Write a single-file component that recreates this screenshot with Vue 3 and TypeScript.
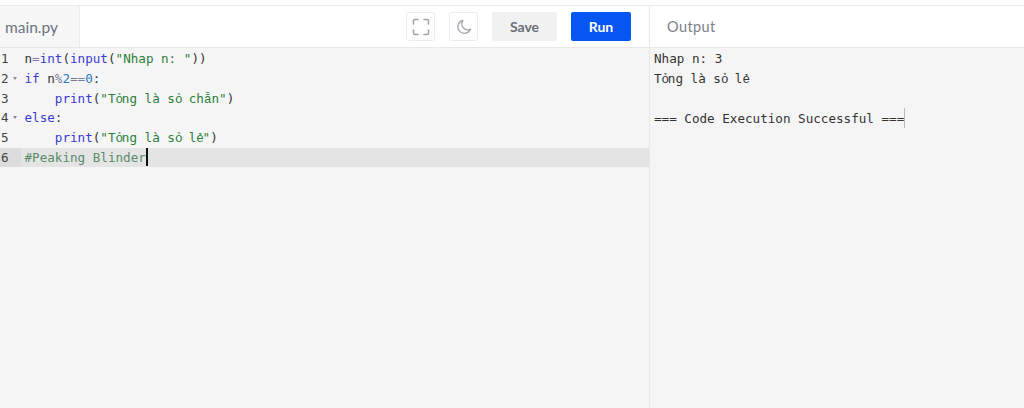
<script setup lang="ts">
interface Tok { t: string; c?: string }

// Split a string so the vowels that fall back to another font get their own span.
function marked(s: string, c: string): Tok[] {
  return s.split(/([ỏẻẵ])/).filter(Boolean).map((t) => ({
    t,
    c: t === 'ẵ' ? `${c} wide` : t === 'ỏ' || t === 'ẻ' ? `${c} narrow` : c,
  }))
}

const lines: { n: number; fold?: boolean; active?: boolean; toks: Tok[] }[] = [
  { n: 1, toks: [{ t: 'n' }, { t: '=', c: 'op' }, { t: 'int', c: 'kw' }, { t: '(' }, { t: 'input', c: 'kw' }, { t: '(' }, { t: '"Nhap n: "', c: 'str' }, { t: '))' }] },
  { n: 2, fold: true, toks: [{ t: 'if', c: 'kw' }, { t: ' n' }, { t: '%', c: 'op' }, { t: '2', c: 'num' }, { t: '==', c: 'op' }, { t: '0', c: 'num' }, { t: ':' }] },
  { n: 3, toks: [{ t: '    ' }, { t: 'print', c: 'kw' }, { t: '(' }, ...marked('"Tỏng là sỏ chẵn"', 'str'), { t: ')' }] },
  { n: 4, fold: true, toks: [{ t: 'else', c: 'kw' }, { t: ':' }] },
  { n: 5, toks: [{ t: '    ' }, { t: 'print', c: 'kw' }, { t: '(' }, ...marked('"Tỏng là sỏ lẻ"', 'str'), { t: ')' }] },
  { n: 6, active: true, toks: [{ t: '#Peaking Blinder', c: 'cmt' }] },
]
const outResult = marked('Tỏng là sỏ lẻ', 'plain')
</script>

<template>
  <div class="page">
    <header class="top">
      <div class="left">
        <div class="tab">main.py</div>
        <div class="actions">
          <button class="icon-btn" aria-label="Fullscreen">
            <svg width="18" height="18" viewBox="0 0 18 18" fill="none" stroke="#a0a5ac" stroke-width="1.6" stroke-linecap="round">
              <path d="M1.500 6V3a1.500 1.500 0 0 1 1.500-1.500H6M12 1.500h3A1.500 1.500 0 0 1 16.500 3V6M16.500 12v3a1.500 1.500 0 0 1-1.500 1.500H12M6 16.500H3A1.500 1.500 0 0 1 1.500 15V12" />
            </svg>
          </button>
          <button class="icon-btn" aria-label="Theme">
            <svg width="18" height="18" viewBox="0 0 18 18" fill="none" stroke="#a4a8ae" stroke-width="1.300" stroke-linejoin="round">
              <path d="M8 2.500A6.500 6.500 0 1 0 15.500 11 5.800 5.800 0 0 1 8 2.500Z" />
            </svg>
          </button>
          <button class="save">Save</button>
          <button class="run">Run</button>
        </div>
      </div>
      <div class="right"><span class="out-title">Output</span></div>
    </header>
    <main class="body">
      <section class="editor">
        <div v-for="l in lines" :key="l.n" class="line" :class="{ active: l.active }">
          <div class="gutter">
            <span>{{ l.n }}</span>
            <i v-if="l.fold" class="fold"></i>
          </div>
          <div class="code"><span v-for="(k, i) in l.toks" :key="i" :class="k.c">{{ k.t }}</span><span v-if="l.active" class="caret"></span></div>
        </div>
      </section>
      <section class="output">
        <div class="out-line">Nhap n: 3</div>
        <div class="out-line"><span v-for="(k, i) in outResult" :key="i" :class="k.c">{{ k.t }}</span></div>
        <div class="out-line">&nbsp;</div>
        <div class="out-line">=== Code Execution Successful ===<span class="out-caret"></span></div>
      </section>
    </main>
  </div>
</template>

<style>
html, body { margin: 0; background: #fff; }
</style>

<style scoped>
.page {
  width: 1024px;
  height: 408px;
  display: flex;
  flex-direction: column;
  padding-top: 5px;
  box-sizing: border-box;
  overflow: hidden;
  background: #fff;
}
.top {
  display: flex;
  height: 43px;
  box-sizing: border-box;
  border-top: 1px solid #ececec;
  border-bottom: 1px solid #e8e8e8;
  flex: none;
}
.left {
  width: 649px;
  display: flex;
  justify-content: space-between;
  align-items: stretch;
  flex: none;
}
.tab {
  width: 80px;
  box-sizing: border-box;
  padding-left: 5px;
  display: flex;
  align-items: center;
  background: #f7f7f7;
  border-right: 1px solid #ececec;
  color: #6b7280;
  font: 400 15.500px "Lato", sans-serif;
}
.actions {
  display: flex;
  align-items: center;
  padding-right: 18px;
}
.icon-btn {
  width: 29px;
  height: 29px;
  padding: 0;
  margin-right: 14px;
  border: 1px solid #ececec;
  border-radius: 3px;
  background: #fff;
  display: flex;
  align-items: center;
  justify-content: center;
}
.save,
.run {
  height: 29px;
  border: 0;
  border-radius: 2px;
  font: 700 14px "Lato", sans-serif;
  padding: 0;
}
.save {
  width: 65px;
  background: #f1f1f1;
  color: #6a6f78;
}
.run {
  width: 60px;
  background: #0556f3;
  color: #fff;
  margin-left: 14px;
}
.right {
  flex: 1;
  border-left: 1px solid #e8e8e8;
  display: flex;
  align-items: center;
  padding-left: 17px;
}
.out-title {
  color: #7a7f88;
  font: 400 14.500px "Lato", sans-serif;
  letter-spacing: 0.4px;
}
.body {
  flex: 1;
  display: flex;
  min-height: 0;
  background: #f5f5f5;
  font: 12.600px/19.800px "DejaVu Sans Mono", monospace;
}
.editor {
  width: 649px;
  flex: none;
  padding-top: 1px;
}
.line {
  display: flex;
  height: 19.800px;
  white-space: pre;
}
.line.active {
  background: #e4e4e4;
  height: 19px;
}
.gutter {
  width: 21px;
  flex: none;
  box-sizing: border-box;
  padding-left: 1px;
  position: relative;
  color: #444;
}
.active .gutter {
  background: #dcdcdc;
}
.fold {
  position: absolute;
  left: 13px;
  top: 8px;
  width: 0;
  height: 0;
  border-left: 2.500px solid transparent;
  border-right: 2.500px solid transparent;
  border-top: 3.500px solid #888;
}
.code {
  flex: 1;
  color: #333;
  padding-left: 3.500px;
}
.kw { color: #3a3ad6; }
.op { color: #7a7aa0; }
.num { color: #2a78c4; }
.str { color: #2a8038; }
.cmt { color: #5a8a6a; }
.narrow {
  font-family: "Liberation Mono", monospace;
  letter-spacing: -1.300px;
}
.wide {
  font-family: "Liberation Mono", monospace;
}
.caret {
  display: inline-block;
  width: 2px;
  height: 18px;
  background: #111;
  vertical-align: -4px;
}
.output {
  flex: 1;
  border-left: 1px solid #e8e8e8;
  padding: 1px 0 0 4px;
  color: #333;
}
.out-line {
  height: 19.800px;
  white-space: pre;
}
.out-caret {
  display: inline-block;
  width: 1px;
  height: 20px;
  background: #bbb;
  vertical-align: -5px;
}
</style>
